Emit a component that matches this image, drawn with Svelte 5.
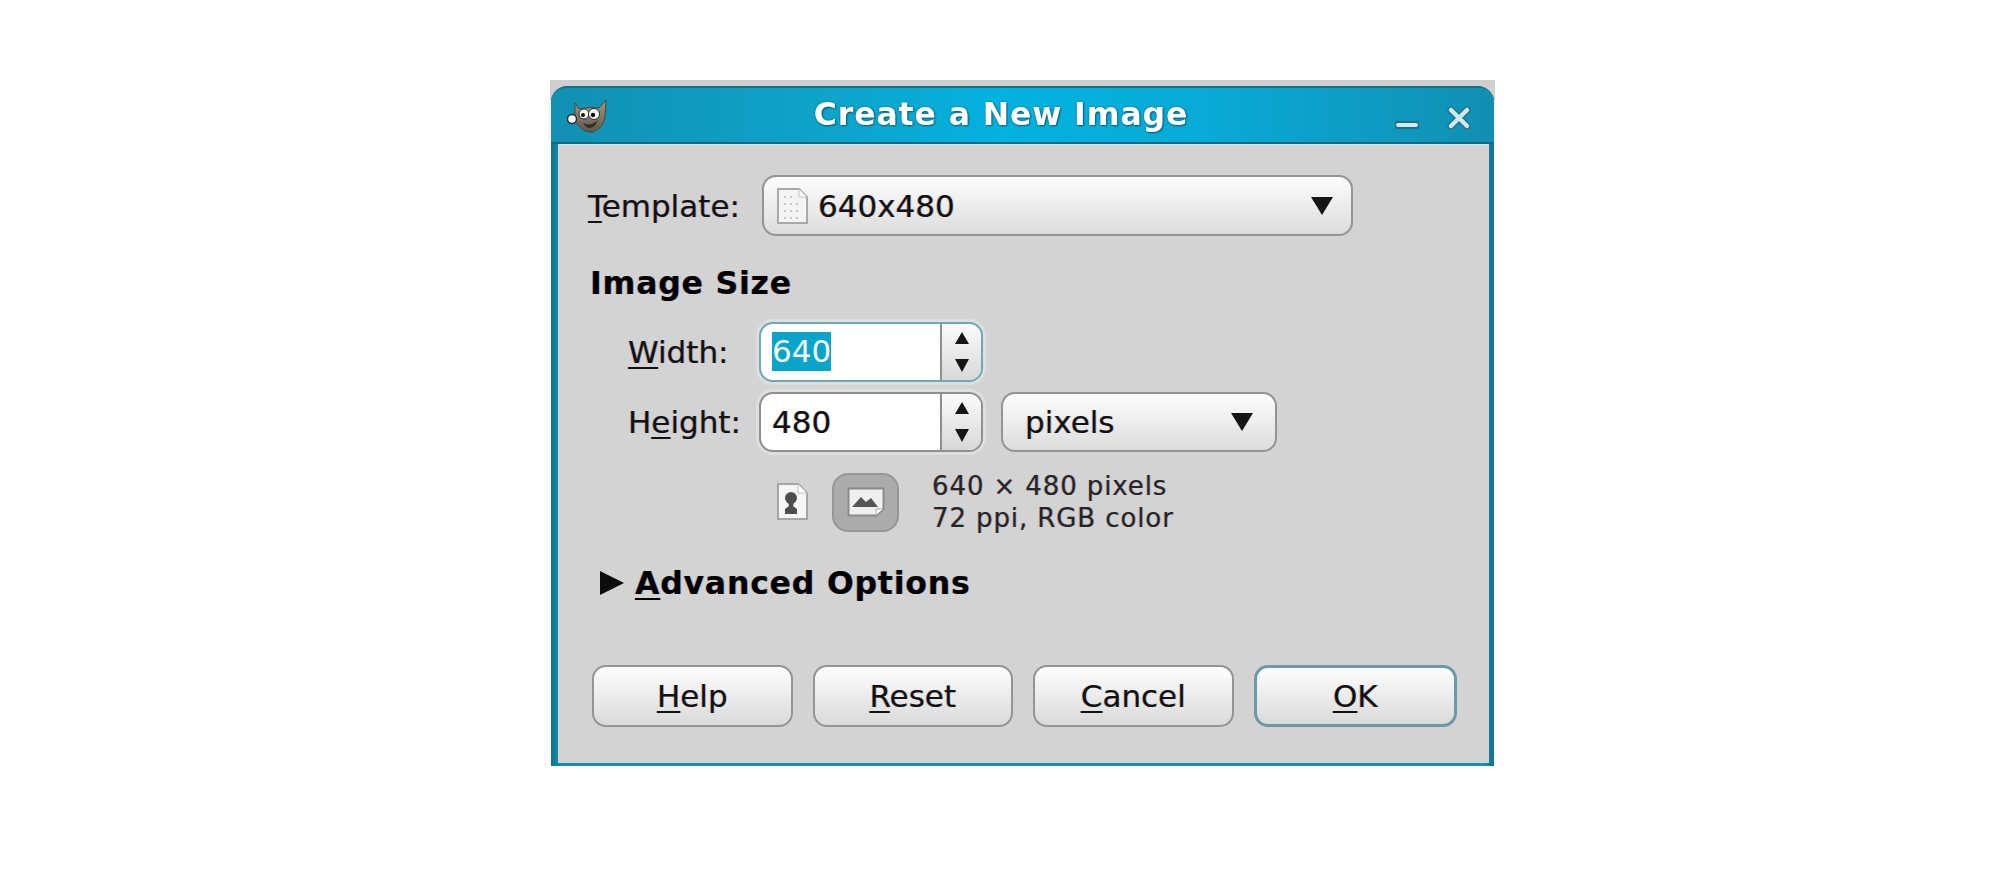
<script>
  let buttons = [
    { key: 'H', rest: 'elp' },
    { key: 'R', rest: 'eset' },
    { key: 'C', rest: 'ancel' },
    { key: 'O', rest: 'K', focus: true }
  ];
</script>

<main class="page">
  <div class="backdrop">
    <div class="window">
      <header class="titlebar">
        <svg class="wilber" viewBox="0 0 40 33" width="40" height="33">
          <defs>
            <linearGradient id="fur" x1="0" y1="0" x2="0" y2="1">
              <stop offset="0" stop-color="#a59a88" />
              <stop offset="1" stop-color="#5f574b" />
            </linearGradient>
          </defs>
          <path d="M8 3 L12 9 Q22 6 32 8 L39 0 L38 18 Q36 28 26 32 Q18 33 12 26 Q8 23 8 18 Z" fill="url(#fur)" stroke="#4a453c" stroke-width="1" />
          <path d="M16 23 Q24 27 31 20 Q28 28 22 28 Q18 27 16 23Z" fill="#332e28" />
          <circle cx="5" cy="19" r="4.500" fill="#f6f6f6" stroke="#2b2b2b" stroke-width="1.400" />
          <circle cx="17" cy="14" r="5" fill="#f6f6f6" stroke="#2b2b2b" />
          <circle cx="27" cy="14" r="5.500" fill="#f6f6f6" stroke="#2b2b2b" />
          <circle cx="16" cy="15" r="2" fill="#111" />
          <circle cx="26" cy="15" r="2.200" fill="#111" />
        </svg>
        <h1>Create a New Image</h1>
        <div class="controls">
          <svg viewBox="0 0 24 10" width="24" height="10"><path d="M3 5H21" stroke="#1f6f86" stroke-width="8" stroke-linecap="round" /><path d="M3 5H21" stroke="#cdeaf1" stroke-width="4" stroke-linecap="round" /></svg>
          <svg viewBox="0 0 24 24" width="24" height="24"><path d="M4 4L20 20M20 4L4 20" stroke="#1f6f86" stroke-width="7" stroke-linecap="round" /><path d="M4 4L20 20M20 4L4 20" stroke="#cdeaf1" stroke-width="4.500" stroke-linecap="round" /></svg>
        </div>
      </header>

      <section class="content">
        <div class="template-row">
          <span class="template-label"><u>T</u>emplate:</span>
          <div class="combo wide">
            <svg class="page-icon" viewBox="0 0 32 36" width="32" height="36">
              <path d="M2 1H23L31 9V35H2Z" fill="#f4f4f2" stroke="#a9a9a9" stroke-width="2" />
              <path d="M23 1V9H31Z" fill="#fff" stroke="#bdbdbd" />
              <g fill="#c6c6c6">
                <rect x="8" y="8" width="2" height="2" /><rect x="14" y="8" width="2" height="2" />
                <rect x="8" y="15" width="2" height="2" /><rect x="14" y="15" width="2" height="2" /><rect x="20" y="15" width="2" height="2" />
                <rect x="8" y="22" width="2" height="2" /><rect x="14" y="22" width="2" height="2" /><rect x="20" y="22" width="2" height="2" />
                <rect x="8" y="29" width="2" height="2" /><rect x="14" y="29" width="2" height="2" /><rect x="20" y="29" width="2" height="2" />
              </g>
            </svg>
            <span class="combo-text">640x480</span>
            <span class="down big"></span>
          </div>
        </div>

        <h2>Image Size</h2>

        <div class="size-grid">
          <span class="field-label"><u>W</u>idth:</span>
          <div class="spin focused">
            <div class="entry"><span class="selected">640</span></div>
            <div class="steps"><span class="up"></span><span class="down"></span></div>
          </div>
          <span></span>

          <span class="field-label">H<u>e</u>ight:</span>
          <div class="spin">
            <div class="entry"><span>480</span></div>
            <div class="steps"><span class="up"></span><span class="down"></span></div>
          </div>
          <div class="combo unit">
            <span class="combo-text">pixels</span>
            <span class="down big"></span>
          </div>
        </div>

        <div class="info-row">
          <svg class="portrait" viewBox="0 0 32 38" width="32" height="38">
            <path d="M2 1H22L31 10V36H2Z" fill="#f6f6f6" stroke="#a5a5a5" stroke-width="2" />
            <path d="M22 1V10H31Z" fill="#fff" stroke="#bbb" />
            <circle cx="15" cy="15" r="6" fill="#4e4e4e" />
            <path d="M12 19H18L17 23L21 26V31H9V26L13 23Z" fill="#4e4e4e" />
          </svg>
          <div class="toggle">
            <svg viewBox="0 0 38 30" width="38" height="30">
              <path d="M1.500 1.500H36.500V22L29 28.500H1.500Z" fill="#efefef" stroke="#8a8a8a" stroke-width="2" />
              <path d="M5 20L14 10L19 15L24 11L31 20Z" fill="#565656" />
              <path d="M29 28V22H36" fill="#fff" stroke="#aaa" />
            </svg>
          </div>
          <div class="info-text">
            <div>640 × 480 pixels</div>
            <div>72 ppi, RGB color</div>
          </div>
        </div>

        <div class="advanced">
          <span class="expander"></span>
          <span class="advanced-text"><u>A</u>dvanced Options</span>
        </div>

        <div class="buttons">
          {#each buttons as b}
            <button class:focus={b.focus}><u>{b.key}</u>{b.rest}</button>
          {/each}
        </div>
      </section>
    </div>
  </div>
</main>

<style>
  :global(body) {
    margin: 0;
    background: #fff;
  }

  .page {
    padding: 80px 0 0 550px;
    font-family: 'DejaVu Sans', sans-serif;
    font-size: 31px;
    color: #111;
    height: 812px;
    box-sizing: content-box;
    overflow: hidden;
    text-shadow: 0.7px 0 rgba(30, 70, 160, 0.35), -0.7px 0 rgba(170, 80, 20, 0.35);
  }

  .backdrop {
    width: 945px;
    height: 686px;
    padding-top: 6px;
    box-sizing: border-box;
    background: linear-gradient(#cfcfcf 20px, #fff 20px);
  }

  .window {
    height: 680px;
    margin: 0 1px;
    box-sizing: border-box;
    display: flex;
    flex-direction: column;
    border-radius: 16px 16px 0 0;
    overflow: hidden;
    background: linear-gradient(90deg, #14708c 0, #128fb1 1%, #128fb1 99%, #14708c 100%);
    border-top: 2px solid #186f88;
    filter: blur(0.7px);
  }

  .titlebar {
    height: 54px;
    flex: none;
    display: flex;
    align-items: center;
    padding: 0 23px 0 16px;
    background: linear-gradient(90deg, #1190b3 0%, #0ea4cb 30%, #03b2e0 48%, #09aad6 70%, #118fb2 100%);
    border-bottom: 2px solid #0f6a83;
    box-sizing: content-box;
  }

  .wilber {
    flex: none;
    margin-top: 2px;
  }

  h1 {
    flex: 1;
    margin: 0 0 3px;
    text-align: center;
    font-size: 31.500px;
    font-weight: bold;
    letter-spacing: 0.9px;
    color: #fff;
    text-shadow: 0 0 2px #0a5f78, 1px 1px 2px #0a5f78;
  }

  .controls {
    display: flex;
    align-items: flex-end;
    gap: 28px;
    margin-top: 6px;
  }

  .content {
    flex: 1;
    margin: 0 5px 3px 7px;
    padding: 30px 32px 0 30px;
    background: #d3d3d3;
    border-top: 1px solid #e0e0e0;
  }

  u {
    text-decoration-thickness: 2px;
    text-underline-offset: 4px;
  }

  .template-row {
    display: flex;
    align-items: center;
    gap: 19px;
  }

  .template-label {
    width: 155px;
    flex: none;
    white-space: nowrap;
  }

  .combo {
    height: 60px;
    box-sizing: border-box;
    display: flex;
    align-items: center;
    border: 2px solid #949494;
    border-radius: 14px;
    background: linear-gradient(#fdfdfd, #dcdcdc);
  }

  .wide {
    width: 591px;
    height: 61px;
    padding: 0 18px 0 12px;
  }

  .page-icon {
    flex: none;
    margin-right: 10px;
  }

  .combo-text {
    flex: 1;
  }

  .down,
  .up {
    display: block;
    width: 0;
    height: 0;
    border-left: 7px solid transparent;
    border-right: 7px solid transparent;
  }

  .down {
    border-top: 13px solid #151515;
  }

  .up {
    border-bottom: 12px solid #151515;
  }

  .down.big {
    border-left-width: 11px;
    border-right-width: 11px;
    border-top-width: 18px;
  }

  h2 {
    margin: 29px 0 20px 2px;
    font-size: 31.500px;
    line-height: 36px;
    font-weight: bold;
    letter-spacing: 0.8px;
    color: #000;
  }

  .size-grid {
    display: grid;
    grid-template-columns: 131px 224px 276px;
    grid-template-rows: 61px 60px;
    row-gap: 10px;
    padding-left: 40px;
    align-items: center;
  }

  .spin {
    height: 60px;
    width: 224px;
    box-sizing: border-box;
    display: flex;
    border: 2px solid #8f8f8f;
    border-radius: 14px;
    overflow: hidden;
    background: #fff;
    box-shadow: 0 0 0 3px #dedede;
  }

  .spin.focused {
    border-color: #6ea7b6;
  }

  .entry {
    flex: 1;
    display: flex;
    align-items: center;
    padding-left: 11px;
  }

  .selected {
    background: #0aa3c9;
    color: #f4fbfd;
    line-height: 39px;
    height: 39px;
    display: block;
    text-shadow: none;
  }

  .steps {
    width: 39px;
    flex: none;
    display: flex;
    flex-direction: column;
    align-items: center;
    justify-content: center;
    gap: 15px;
    border-left: 2px solid #8f8f8f;
    background: linear-gradient(#fbfbfb, #d8d8d8);
  }

  .unit {
    width: 276px;
    margin-left: 18px;
    padding: 0 22px;
  }

  .info-row {
    display: flex;
    align-items: center;
    margin: 20px 0 0 188px;
    height: 60px;
  }

  .portrait {
    flex: none;
  }

  .toggle {
    width: 67px;
    height: 59px;
    margin-left: 24px;
    box-sizing: border-box;
    display: flex;
    align-items: center;
    justify-content: center;
    border: 2px solid #969696;
    border-radius: 16px;
    background: #ababab;
  }

  .info-text {
    margin-left: 33px;
    font-size: 26px;
    line-height: 32px;
    letter-spacing: 0.9px;
    color: #252525;
  }

  .advanced {
    display: flex;
    align-items: center;
    margin: 29px 0 0 12px;
    height: 44px;
  }

  .expander {
    width: 0;
    height: 0;
    border-top: 12px solid transparent;
    border-bottom: 12px solid transparent;
    border-left: 24px solid #0c0c0c;
    margin-right: 11px;
  }

  .advanced-text {
    font-size: 31.500px;
    font-weight: bold;
    letter-spacing: 0.8px;
    color: #000;
  }

  .buttons {
    display: flex;
    gap: 20px;
    margin: 60px 0 0 4px;
  }

  button {
    width: 201px;
    height: 62px;
    padding: 0;
    border: 2px solid #949494;
    border-radius: 14px;
    background: linear-gradient(#fdfdfd, #dadada);
    font: inherit;
    color: #111;
    text-shadow: inherit;
  }

  button.focus {
    width: 204px;
    border: 3px solid #6a9aa8;
  }
</style>
